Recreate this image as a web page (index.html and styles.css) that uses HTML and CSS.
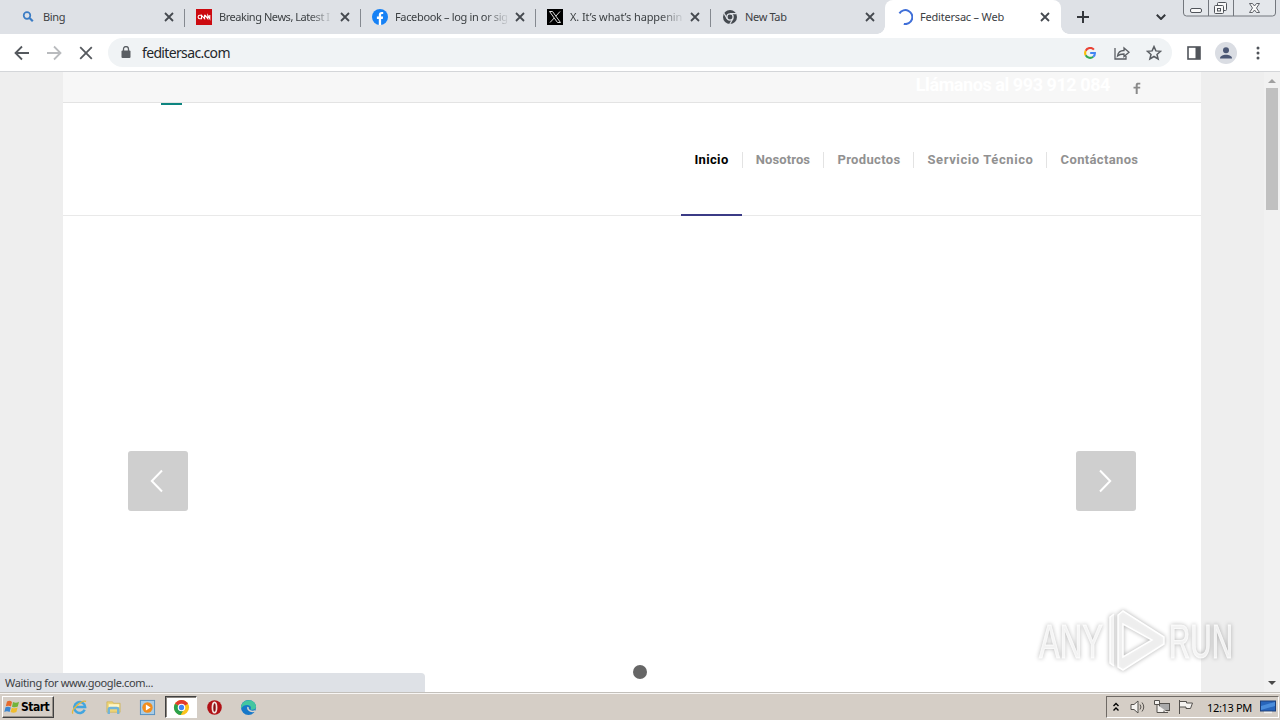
FILE: index.html
```
<!DOCTYPE html>
<html lang="es">
<head>
    <meta charset="UTF-8">
    <meta name="viewport" content="width=device-width, initial-scale=1.0">
    <title>Feditersac – Web</title>
    <link rel="stylesheet" href="styles.css">
</head>
<body>
    <div class="tab-bar">
        <div class="tab t-bing">
            <svg class="favicon" viewBox="0 0 16 16"><circle cx="7" cy="6.5" r="3.3" fill="none" stroke="#3b7cc4" stroke-width="1.7"/><path d="M9.5 9l3.3 3.3" stroke="#3b7cc4" stroke-width="2.2"/></svg>
            <span class="tab-title">Bing</span>
            <svg class="close" viewBox="0 0 10 10"><path d="M1 1l8 8M9 1l-8 8"/></svg>
        </div>
        <div class="tab t-cnn">
            <svg class="favicon" viewBox="0 0 16 16"><rect width="16" height="16" fill="#cc0a10"/><path d="M5.200 6.300H3.800a1.700 1.700 0 0 0 0 3.400h1.700V6.300L8.600 9.700V6.300h.6l2.600 3.400V6.300l2 3.400V6" fill="none" stroke="#fff" stroke-width="1.1"/></svg>
            <span class="tab-title">Breaking News, Latest I</span>
            <svg class="close" viewBox="0 0 10 10"><path d="M1 1l8 8M9 1l-8 8"/></svg>
        </div>
        <div class="tab t-fb">
            <svg class="favicon" viewBox="0 0 16 16"><circle cx="8" cy="8" r="8" fill="#1681f5"/><path d="M6.8 16V10H4.9V7.5h1.9V6c0-2 1.1-3 2.9-3l1.5.1v2h-1c-.9 0-1.1.5-1.1 1.2v1.2h2L10.8 10H9.1v6z" fill="#fff"/></svg>
            <span class="tab-title">Facebook – log in or sig</span>
            <svg class="close" viewBox="0 0 10 10"><path d="M1 1l8 8M9 1l-8 8"/></svg>
        </div>
        <div class="tab t-x">
            <svg class="favicon" viewBox="0 0 16 16"><rect width="16" height="16" fill="#000"/><path d="M2.5 2.500h3l8 11h-3zM13 2.500L8.800 7.200M7.200 9L3 13.500" fill="none" stroke="#ddd" stroke-width="1"/></svg>
            <span class="tab-title">X. It’s what’s happenin</span>
            <svg class="close" viewBox="0 0 10 10"><path d="M1 1l8 8M9 1l-8 8"/></svg>
        </div>
        <div class="tab t-new">
            <svg class="favicon" viewBox="0 0 16 16"><circle cx="8" cy="8" r="7" fill="#454a50"/><circle cx="8" cy="8" r="3.1" fill="#454a50" stroke="#dee1e6" stroke-width="1.3"/><path d="M8 4.700h6.300M5.100 9.600L2 4.300M10.900 9.600L7.800 15" stroke="#dee1e6" stroke-width="1.2"/></svg>
            <span class="tab-title">New Tab</span>
            <svg class="close" viewBox="0 0 10 10"><path d="M1 1l8 8M9 1l-8 8"/></svg>
        </div>
        <div class="tab active">
            <svg class="favicon" viewBox="0 0 16 16"><path d="M1.7 5.800A7 7 0 1 1 8.500 15" transform="rotate(14 8 8)" fill="none" stroke="#3f6fd8" stroke-width="2"/></svg>
            <span class="tab-title">Feditersac – Web</span>
            <svg class="close" viewBox="0 0 10 10"><path d="M1 1l8 8M9 1l-8 8"/></svg>
        </div>
        <svg class="new-tab" viewBox="0 0 12 12"><path d="M6 0v12M0 6h12"/></svg>
        <svg class="tab-search" viewBox="0 0 10 6"><path d="M.8.8L5 5 9.200.8"/></svg>
        <svg class="window-buttons" viewBox="0 0 94 18">
            <path d="M.5 0v13a3 3 0 0 0 3 3h86a3 3 0 0 0 3-3V0M25.500 0v16M50.500 0v16" fill="#e4e7eb" stroke="#73777d"/>
            <g fill="#f8f8f8" stroke="#50545a">
                <rect x="7.5" y="8.5" width="11" height="4" rx="1.5"/>
                <rect x="34.5" y="2.5" width="9" height="8" rx="1"/>
                <rect x="31.5" y="5.5" width="9" height="8" rx="1"/>
                <rect x="34.5" y="8.5" width="3" height="2.5"/>
                <path d="M66.500 3.500h3l2 2.500 2-2.500h3L73.500 8l3 4.500h-3l-2-2.500-2 2.500h-3L69.500 8z" stroke-width=".9"/>
            </g>
        </svg>
    </div>

    <div class="toolbar">
        <svg class="nav-icon back" viewBox="0 0 16 16"><path d="M15 8H2M8 1.500L1.500 8 8 14.500"/></svg>
        <svg class="nav-icon forward" viewBox="0 0 16 16"><path d="M1 8h13M8 1.500L14.500 8 8 14.500"/></svg>
        <svg class="nav-icon stop" viewBox="0 0 16 16"><path d="M2.200 2.200l11.600 11.600M13.800 2.200L2.200 13.800"/></svg>
        <div class="address">
            <svg class="lock" viewBox="0 0 10 12"><rect x=".5" y="4.5" width="9" height="7.5" rx="1" fill="#5a5e63"/><path d="M2.500 5V3a2.500 2.500 0 0 1 5 0v2" fill="none" stroke="#5a5e63" stroke-width="1.3"/></svg>
            <span class="url">feditersac.com</span>
            <svg class="google" viewBox="0 0 12 12" fill="none" stroke-width="2.1"><path d="M9.900 2.600A5 5 0 0 0 1.700 3.700" stroke="#ea4335"/><path d="M1.700 3.700a5 5 0 0 0 0 4.600" stroke="#fbbc05"/><path d="M1.700 8.300a5 5 0 0 0 7.500 1.500" stroke="#34a853"/><path d="M9.200 9.800A4.600 4.600 0 0 0 10.900 6H6.200" stroke="#4285f4"/></svg>
            <svg class="share" viewBox="0 0 16 16"><path d="M1 3v11h11v-3M3.500 11C4 7.500 6.500 5.500 10 5.500V3l5 4.300-5 4.200V9C7 9 5 9.500 3.500 11z"/></svg>
            <svg class="star" viewBox="0 0 16 16"><path d="M8 1.600l1.900 4.300 4.700.4-3.600 3.100 1.100 4.600L8 11.500 3.900 14 5 9.400 1.400 6.300l4.700-.4z"/></svg>
        </div>
        <svg class="side-panel" viewBox="0 0 14 14"><rect x="1" y="1" width="12" height="12" fill="none" stroke="#50545a" stroke-width="1.6"/><rect x="8.5" y="1" width="4.5" height="12" fill="#50545a"/></svg>
        <svg class="profile" viewBox="0 0 22 22"><circle cx="11" cy="11" r="11" fill="#dadde3"/><circle cx="11" cy="8.2" r="3" fill="#4b5774"/><path d="M5 16.500c0-5 12-5 12 0z" fill="#4b5774"/></svg>
        <svg class="more" viewBox="0 0 4 14"><circle cx="2" cy="2" r="1.5"/><circle cx="2" cy="7" r="1.5"/><circle cx="2" cy="12" r="1.5"/></svg>
    </div>

    <div class="viewport">
        <div class="page">
            <div class="topbar">
                <span class="phone">Llámanos al 993 912 084</span>
                <svg class="facebook" viewBox="0 0 8 12"><path d="M2.700 12V6.500H.5V4.700h2.200V3.200C2.700 1.400 3.700.8 5.200.8h2.100v1.700H5.800c-.8 0-1.100.3-1.100 1v1.200h2.500v1.800H4.700V12z" fill="#8a8a8a"/></svg>
            </div>
            <div class="header">
                <div class="logo"></div>
                <nav class="menu">
                    <a class="item inicio current">Inicio</a>
                    <a class="item nosotros">Nosotros</a>
                    <a class="item productos">Productos</a>
                    <a class="item servicio">Servicio Técnico</a>
                    <a class="item contacto">Contáctanos</a>
                </nav>
            </div>
            <div class="slider">
                <a class="arrow"><svg viewBox="0 0 14 24"><path d="M12 1.500L1.800 12 12 22.500"/></svg></a>
                <a class="arrow"><svg viewBox="0 0 14 24"><path d="M2 1.500L12.200 12 2 22.500"/></svg></a>
                <span class="dot"></span>
            </div>
        </div>
        <div class="scrollbar">
            <svg class="scroll-arrow up" viewBox="0 0 8 4"><path d="M0 4l4-4 4 4z"/></svg>
            <div class="thumb"></div>
            <svg class="scroll-arrow down" viewBox="0 0 8 4"><path d="M0 0l4 4 4-4z"/></svg>
        </div>
        <div class="status">Waiting for www.google.com...</div>
        <svg class="watermark" viewBox="0 0 210 72">
            <g class="mark-text">
                <text x="8" y="54" textLength="64" lengthAdjust="spacingAndGlyphs">ANY</text>
                <text x="138" y="54" textLength="64" lengthAdjust="spacingAndGlyphs">RUN</text>
            </g>
            <g class="mark-logo">
                <path d="M92 7l41 26v7L92 66l-5-3V11zM92 20v33l29-17zM83 10l-4 3v46l4 3"/>
            </g>
        </svg>
    </div>

    <div class="taskbar">
        <div class="start">
            <svg class="flag" viewBox="0 0 16 14"><path d="M3 1.500Q6 0 8 2L7 6.500Q4.500 5 1.800 6.300z" fill="#e66b2c"/><path d="M9 2q3 1.500 6-.2L13.800 6.500Q11 8 8 6.700z" fill="#72b43b"/><path d="M1.500 7.300Q4 6 6.800 7.500L5.600 12Q3 10.500.3 12z" fill="#3b86d0"/><path d="M7.800 7.700q3 1.300 5.800-.2L12.400 12q-3 1.600-5.800 0z" fill="#f0bd2d"/></svg>
            <span>Start</span>
        </div>
        <div class="task"><svg viewBox="0 0 18 18"><path d="M14.500 11.500A5.800 5.800 0 1 1 15 8.500H5" fill="none" stroke="#42a5df" stroke-width="2.6"/><path d="M2 15.500C-.5 12 11 .5 16 2.500" fill="none" stroke="#e5b83c" stroke-width="1.4"/></svg></div>
        <div class="task"><svg viewBox="0 0 18 18"><path d="M2 3h6l1 1.500h7V14H2z" fill="#eed577" stroke="#cbb053" stroke-width=".7"/><path d="M4 7h11" stroke="#fff7c6" stroke-width="3"/><path d="M4 16v-5q0-1.500 1.500-1.500h7Q14 9.500 14 11v5" fill="none" stroke="#70b4d9" stroke-width="2.5"/></svg></div>
        <div class="task"><svg viewBox="0 0 18 18"><rect x="1.5" y="1.5" width="15" height="15" fill="#a9cce5" stroke="#538fc2"/><circle cx="9" cy="9" r="5.5" fill="#f28d1d"/><path d="M7.300 5.800l5 3.200-5 3.200z" fill="#fff"/></svg></div>
        <div class="task pressed"><svg viewBox="0 0 18 18"><circle cx="9" cy="9" r="8" fill="#fbc31c"/><path d="M9 9L2.100 5A8 8 0 0 1 15.900 5z" fill="#e33b2e"/><path d="M9 9L2.100 5a8 8 0 0 0 6 12L12 10z" fill="#2ba14b"/><circle cx="9" cy="9" r="3.4" fill="#4285f4" stroke="#fff" stroke-width="1.2"/></svg></div>
        <div class="task opera"><svg viewBox="0 0 18 18"><circle cx="9" cy="9" r="7.7" fill="#b11116"/><ellipse cx="9" cy="9" rx="2.2" ry="5.5" fill="#861014" stroke="#f3e3e0" stroke-width="1.8"/></svg></div>
        <div class="task"><svg viewBox="0 0 18 18"><circle cx="9" cy="9" r="8" fill="#1778c9"/><path d="M2 5.500C5-.5 16-.5 17 8c0 3-3 4-6 3 1-1 1-4-2-4.500C6 6 3 7 1.200 10 .8 8 1.200 7 2 5.500z" fill="#43c6a0"/><path d="M8.500 8.500c-1 3 3 5.500 7.500 4.300" fill="none" stroke="#d8d4cc" stroke-width="1.6"/></svg></div>
        <div class="tray">
            <svg class="chevrons" viewBox="0 0 6 10"><path d="M.5 4L3 1.500 5.500 4M.5 8.500L3 6l2.500 2.500"/></svg>
            <svg class="tray-icon" viewBox="0 0 16 16"><path d="M1 5.500h3L8 2v12l-4-3.500H1z"/><path d="M10 5.500q2 2.500 0 5M12 3.500q3.500 4.500 0 9" fill="none"/></svg>
            <svg class="tray-icon" viewBox="0 0 16 16"><rect x="5.5" y="4.5" width="10" height="7" fill="#aaa"/><path d="M.5 1.500h5v4h-5zM3 5.500v8h11M10 11.500v2"/></svg>
            <svg class="tray-icon" viewBox="0 0 16 16"><path d="M1.500 1v14M1.500 2.500h7V4h6l-2 5.500H8V8H1.500z"/></svg>
            <span class="clock">12:13 PM</span>
            <svg class="desktop" viewBox="0 0 16 14"><rect x=".5" y="1" width="15" height="10" fill="#2865bb" stroke="#1d3f79"/><path d="M1 6L15 2v4L1 10z" fill="#4b8ddb"/><path d="M4 12.500h8" stroke="#eee" stroke-width="1.5"/></svg>
        </div>
    </div>
</body>
</html>
```
FILE: styles.css
```
* {
    box-sizing: border-box;
}

body {
    margin: 0;
    width: 1280px;
    height: 720px;
    overflow: hidden;
    display: flex;
    flex-direction: column;
    font-family: "Noto Sans", sans-serif;
    font-size: 11px;
    color: #3c4043;
}

svg {
    display: block;
    flex: none;
}

/* Tabs */
.tab-bar {
    height: 34px;
    flex: none;
    display: flex;
    background-color: #dee1e6;
    padding-left: 10px;
}

.tab {
    width: 175px;
    height: 34px;
    display: flex;
    align-items: center;
    padding: 0 11px;
    letter-spacing: -0.35px;
    background: linear-gradient(#858990, #858990) right 9px / 1px 18px no-repeat;
}

.t-bing {
    padding-left: 10px;
}

.t-cnn {
    width: 176px;
    letter-spacing: -0.45px;
}

.t-x {
    letter-spacing: -0.1px;
}

.t-new {
    width: 174px;
    padding-right: 10px;
    background: none;
}

.tab.active {
    position: relative;
    width: 176px;
    padding-left: 12px;
    letter-spacing: -0.2px;
    background: #fff;
    border-radius: 8px 8px 0 0;
}

.tab.active::before,
.tab.active::after {
    content: "";
    position: absolute;
    bottom: 0;
    left: -8px;
    width: 8px;
    height: 8px;
    background: radial-gradient(circle at 0 0, transparent 7.5px, #fff 8px);
}

.tab.active::after {
    left: auto;
    right: -8px;
    background: radial-gradient(circle at 100% 0, transparent 7.5px, #fff 8px);
}

.favicon {
    width: 16px;
    height: 16px;
    margin-right: 7px;
}

.tab-title {
    flex: 1;
    width: 0;
    white-space: nowrap;
    margin-right: 5px;
    position: relative;
    top: -1px;
}

.t-cnn .tab-title,
.t-fb .tab-title,
.t-x .tab-title {
    -webkit-mask-image: linear-gradient(to right, #000 90px, transparent 115px);
    mask-image: linear-gradient(to right, #000 90px, transparent 115px);
}

.close {
    width: 10px;
    height: 10px;
    fill: none;
    stroke: #45494f;
    stroke-width: 1.8;
}

.new-tab {
    width: 12px;
    height: 12px;
    margin: 11px 0 0 16px;
    stroke: #34373c;
    stroke-width: 2;
}

.tab-search {
    width: 10px;
    height: 6px;
    margin: 14px 0 0 67px;
    fill: none;
    stroke: #34373c;
    stroke-width: 2;
}

.window-buttons {
    width: 94px;
    height: 18px;
    margin-left: 17px;
}

/* Toolbar */
.toolbar {
    height: 38px;
    flex: none;
    display: flex;
    align-items: center;
    background-color: #fff;
    border-bottom: 1px solid #d4d6d9;
    padding-left: 14px;
}

.nav-icon {
    width: 16px;
    height: 16px;
    margin-right: 16px;
    fill: none;
    stroke: #55595e;
    stroke-width: 1.8;
}

.forward {
    stroke: #b9bbbe;
}

.stop {
    margin-right: 14px;
}

.address {
    width: 1064px;
    height: 29px;
    display: flex;
    align-items: center;
    border-radius: 15px;
    background-color: #f0f3f5;
    padding: 0 10px 0 13px;
}

.lock {
    width: 10px;
    height: 12px;
    margin: -2px 11px 0 0;
}

.url {
    flex: 1;
    font-size: 14px;
    letter-spacing: -0.65px;
    color: #24272b;
}

.google {
    width: 12px;
    height: 12px;
    margin-right: 18px;
}

.share,
.star {
    width: 16px;
    height: 16px;
    fill: none;
    stroke: #5a5e63;
    stroke-width: 1.3;
}

.share {
    margin-right: 16px;
}

.star {
    stroke-width: 1.5;
}

.side-panel {
    width: 14px;
    height: 14px;
    margin-left: 15px;
}

.profile {
    width: 22px;
    height: 22px;
    margin-left: 14px;
}

.more {
    width: 4px;
    height: 14px;
    margin-left: 19px;
    fill: #50545a;
}

/* Page */
.viewport {
    position: relative;
    height: 620px;
    flex: none;
    display: flex;
    background-color: #eee;
    padding-left: 63px;
}

.page {
    width: 1138px;
    height: 620px;
    display: flex;
    flex-direction: column;
    background-color: #fff;
    font-family: Roboto, sans-serif;
}

.topbar {
    height: 31px;
    display: flex;
    justify-content: flex-end;
    background-color: #f7f7f7;
    border-bottom: 1px solid #e3e3e3;
    padding-right: 60px;
}

.phone {
    font-size: 18px;
    line-height: 26px;
    font-weight: bold;
    color: #fff;
    letter-spacing: -0.43px;
    margin-right: 23px;
}

.facebook {
    width: 8px;
    height: 12px;
    margin-top: 10px;
}

.header {
    height: 113px;
    display: flex;
    justify-content: space-between;
    border-bottom: 1px solid #e9e9e9;
    padding-right: 49px;
}

.logo {
    width: 21px;
    height: 2px;
    margin-left: 98px;
    background-color: #0d8580;
}

.menu {
    display: flex;
    height: 113px;
}

.item {
    display: flex;
    align-items: center;
    justify-content: center;
    font-size: 13px;
    font-weight: bold;
    color: #919191;
    white-space: nowrap;
    letter-spacing: 0.35px;
    background: linear-gradient(#e3e3e3, #e3e3e3) right 49px / 1px 16px no-repeat;
}

.item.current {
    color: #000;
    border-bottom: 2px solid #3b3b86;
    padding-top: 2px;
}

.inicio {
    width: 61px;
    background: none;
}

.nosotros {
    width: 82px;
    letter-spacing: 0.1px;
    background: linear-gradient(#e3e3e3, #e3e3e3) left 49px / 1px 16px no-repeat, linear-gradient(#e3e3e3, #e3e3e3) right 49px / 1px 16px no-repeat;
}

.productos {
    width: 90px;
}

.servicio {
    width: 133px;
    letter-spacing: 0.6px;
}

.contacto {
    width: 105px;
    background: none;
}

.slider {
    position: relative;
    flex: 1;
    display: flex;
    justify-content: space-between;
    align-items: center;
    padding: 54px 65px 0;
}

.arrow {
    width: 60px;
    height: 60px;
    display: flex;
    align-items: center;
    justify-content: center;
    border-radius: 3px;
    background-color: #cfcfcf;
    padding-right: 2px;
}

.arrow svg {
    width: 14px;
    height: 24px;
    fill: none;
    stroke: #fff;
    stroke-width: 2;
}

.dot {
    position: absolute;
    left: 570px;
    bottom: 13px;
    width: 14px;
    height: 14px;
    border-radius: 50%;
    background-color: #666;
}

.scrollbar {
    width: 16px;
    height: 620px;
    margin-left: auto;
    display: flex;
    flex-direction: column;
    align-items: center;
    background-color: #f1f1f1;
}

.scroll-arrow {
    width: 8px;
    height: 4px;
}

.up {
    margin: 7px 0 5px;
    fill: #a0a0a0;
}

.down {
    margin: auto 0 7px;
    fill: #4a4a4a;
}

.thumb {
    width: 12px;
    height: 122px;
    background-color: #c0c0c0;
}

.status {
    position: absolute;
    left: 0;
    bottom: 0;
    width: 425px;
    height: 19px;
    line-height: 20px;
    padding-left: 5px;
    letter-spacing: -0.36px;
    border-radius: 0 4px 0 0;
    background-color: #dee1e6;
}

.watermark {
    position: absolute;
    left: 1031px;
    top: 532px;
    width: 210px;
    height: 72px;
    filter: drop-shadow(0 0 2px rgba(0, 0, 0, 0.35));
}

.mark-text {
    font-family: "Liberation Sans", sans-serif;
    font-size: 49px;
    fill: #fff;
    fill-opacity: 0.75;
    stroke: #fff;
    stroke-opacity: 0.75;
}

.mark-logo {
    fill: #fff;
    fill-opacity: 0.75;
    fill-rule: evenodd;
    stroke: #fff;
    stroke-width: 1.5;
}

/* Taskbar */
.taskbar {
    height: 28px;
    flex: none;
    display: flex;
    align-items: center;
    background-color: #d5cec6;
    border-top: 1px solid #c3c0bb;
    box-shadow: inset 0 1px #f8f6f4;
    padding: 1px 1px 0 2px;
}

.start {
    width: 52px;
    height: 22px;
    display: flex;
    align-items: center;
    border: 1px solid;
    border-color: #fff #404040 #404040 #fff;
    box-shadow: inset -1px -1px #969089;
    padding-left: 1px;
    margin-right: 9px;
    font-family: "DejaVu Sans Condensed", "DejaVu Sans", sans-serif;
    font-size: 12px;
    font-weight: bold;
    letter-spacing: -0.5px;
    color: #000;
}

.flag {
    width: 16px;
    height: 14px;
    margin-right: 1px;
}

.task {
    width: 32px;
    height: 22px;
    margin-right: 2px;
    display: flex;
    align-items: center;
    justify-content: center;
}

.task svg {
    width: 17px;
    height: 17px;
}

.opera {
    margin-left: -1px;
}

.pressed {
    background-color: #fff;
    border: 1px solid;
    border-color: #404040 #fff #fff #404040;
    box-shadow: inset 1px 1px #8b8680;
}

.tray {
    width: 173px;
    height: 22px;
    margin-left: auto;
    display: flex;
    align-items: center;
    border: 1px solid;
    border-color: #6f6a65 #fff #fff #6f6a65;
    padding-left: 6px;
}

.chevrons {
    width: 6px;
    height: 10px;
    fill: none;
    stroke: #000;
    stroke-width: 1.4;
    margin-right: 11px;
}

.tray-icon {
    width: 16px;
    height: 16px;
    margin-right: 8px;
    fill: #f5f3f0;
    stroke: #55524e;
}

.clock {
    font-size: 11px;
    letter-spacing: -0.35px;
    color: #000;
    white-space: nowrap;
    margin-left: 5px;
}

.desktop {
    width: 16px;
    height: 14px;
    margin: 0 2px 0 auto;
}
```
